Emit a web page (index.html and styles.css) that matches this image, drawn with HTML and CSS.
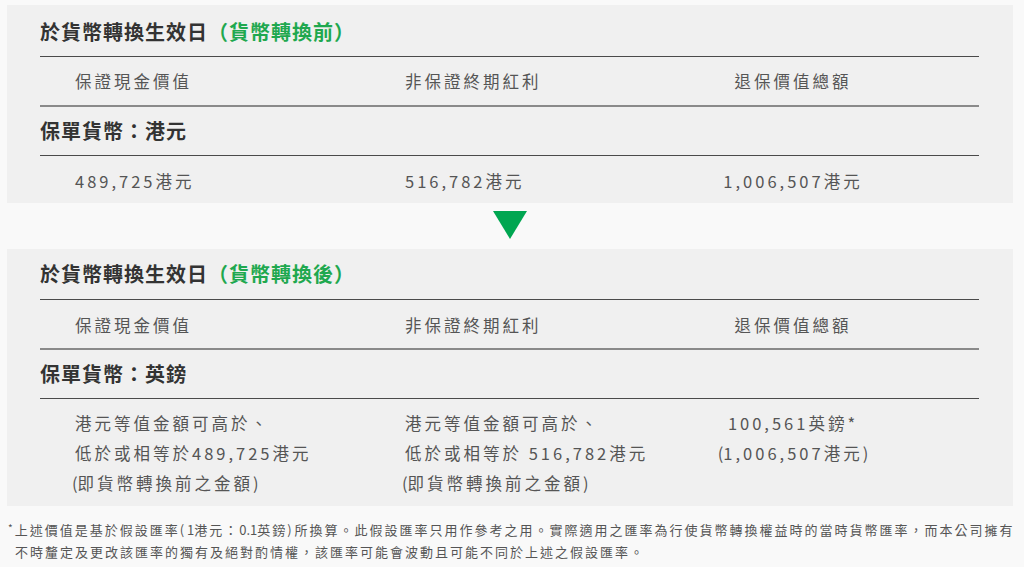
FILE: index.html
```html
<!DOCTYPE html>
<html lang="zh-Hant">
<head>
<meta charset="utf-8">
<link rel="stylesheet" href="styles.css">
</head>
<body>
<div class="page">
  <section class="panel">
    <h2 class="title">於貨幣轉換生效日<span class="accent">（貨幣轉換前）</span></h2>
    <div class="row head">
      <div class="c1">保證現金價值</div>
      <div class="c2">非保證終期紅利</div>
      <div class="c3">退保價值總額</div>
    </div>
    <h3 class="sub">保單貨幣：港元</h3>
    <div class="row vals">
      <div class="c1">489,725港元</div>
      <div class="c2">516,782港元</div>
      <div class="c3">1,006,507港元</div>
    </div>
  </section>

  <div class="arrow-wrap"><div class="arrow"></div></div>

  <section class="panel panel-b">
    <h2 class="title title-b">於貨幣轉換生效日<span class="accent">（貨幣轉換後）</span></h2>
    <div class="row head head-b">
      <div class="c1">保證現金價值</div>
      <div class="c2">非保證終期紅利</div>
      <div class="c3">退保價值總額</div>
    </div>
    <h3 class="sub">保單貨幣：英鎊</h3>
    <div class="row vals vals-b">
      <div class="c1">港元等值金額可高於、<br>低於或相等於489,725港元<br><span class="paren"><span class="tight">(</span>即貨幣轉換前之金額<span class="tight">)</span></span></div>
      <div class="c2">港元等值金額可高於、<br>低於或相等於 516,782港元<br><span class="paren"><span class="tight">(</span>即貨幣轉換前之金額<span class="tight">)</span></span></div>
      <div class="c3">100,561英鎊*<br><span class="tight">(</span>1,006,507港元<span class="tight">)</span></div>
    </div>
  </section>

  <p class="note"><span class="star">*</span>上述價值是基於假設匯率<span class="ascii">( 1</span>港元：<span class="ascii">0.1</span>英鎊<span class="ascii">)&nbsp;</span>所換算。此假設匯率只用作參考之用。實際適用之匯率為行使貨幣轉換權益時的當時貨幣匯率，而本公司擁有<br>不時釐定及更改該匯率的獨有及絕對酌情權，該匯率可能會波動且可能不同於上述之假設匯率。</p>
</div>
</body>
</html>
```

FILE: styles.css
```css
* { box-sizing: border-box; }
html, body { margin: 0; padding: 0; }
body {
  background: #f9f9f9;
  font-family: "Noto Sans CJK TC", "Noto Sans", sans-serif;
  color: #555;
  width: 1024px;
  height: 567px;
  overflow: hidden;
}
.page {
  padding: 5px 11px 0 7px;
}
.panel {
  background: #f0f0f0;
  padding: 0 34px 0 33px;
}
.title {
  margin: 0;
  font-size: 20px;
  font-weight: 700;
  letter-spacing: 1px;
  line-height: 30px;
  color: #333;
  padding: 12px 0 9px;
  border-bottom: 1px solid #4a4a4a;
}
.title-b {
  padding: 10px 0 10px;
}
.accent { color: #1fa84f; }
.row {
  display: grid;
  grid-template-columns: 330px 263px 250px;
  padding-left: 35px;
  font-size: 16.5px;
  letter-spacing: 3px;
  line-height: 30px;
  color: #555;
}
.c3 { text-align: center; white-space: nowrap; }
.tight { letter-spacing: 0; }
.head {
  padding-top: 9px;
  padding-bottom: 9px;
  border-bottom: 2px solid #8a8a8a;
}
.head-b {
  padding-top: 10px;
  padding-bottom: 8px;
}
.sub {
  margin: 0;
  font-size: 20px;
  font-weight: 700;
  letter-spacing: 1px;
  line-height: 30px;
  color: #333;
  padding: 9px 0 9px;
  border-bottom: 1px solid #4a4a4a;
}
.vals {
  padding-top: 10px;
  padding-bottom: 7px;
}
.vals-b {
  padding-top: 9px;
  padding-bottom: 8px;
}
.paren { margin-left: -3px; }
.arrow-wrap {
  display: flex;
  justify-content: center;
  padding: 8px 0 10px;
}
.arrow {
  width: 0;
  height: 0;
  border-left: 17px solid transparent;
  border-right: 17px solid transparent;
  border-top: 28px solid #00a651;
}
.note {
  margin: 11px 0 0;
  padding-left: 8px;
  text-indent: -7px;
  font-size: 13px;
  line-height: 22px;
  letter-spacing: 2px;
  color: #555;
  white-space: nowrap;
}
.ascii { letter-spacing: 0; }
.star {
  font-size: 10px;
  vertical-align: 3px;
  letter-spacing: 0;
  margin-right: 2px;
}
```
